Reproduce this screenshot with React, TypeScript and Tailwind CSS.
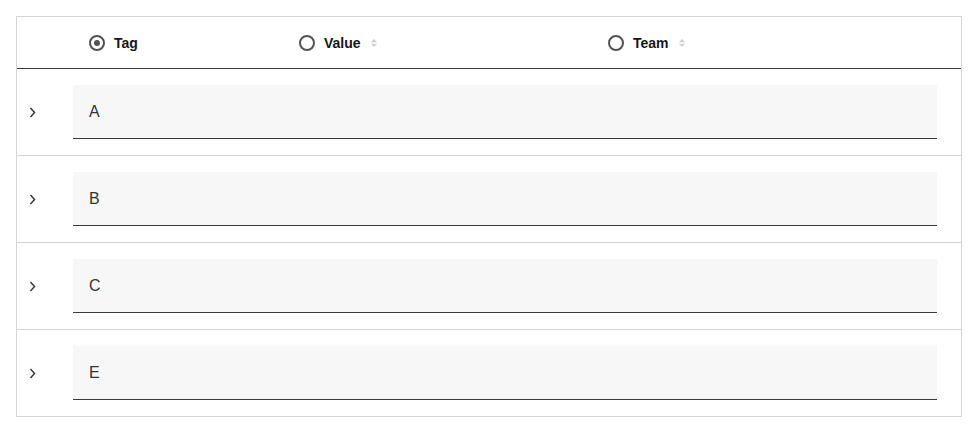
import React from "react";

type Col = { key: string; label: string; width: string; sortable: boolean };

const columns: Col[] = [
  { key: "tag", label: "Tag", width: "w-[210px]", sortable: false },
  { key: "value", label: "Value", width: "w-[309px]", sortable: true },
  { key: "team", label: "Team", width: "flex-1", sortable: true },
];

const rows = ["A", "B", "C", "E"];

function Radio({ checked }: { checked: boolean }) {
  return (
    <span className="w-4 h-4 rounded-full border-2 border-[#525252] flex items-center justify-center shrink-0">
      {checked && <span className="w-[6px] h-[6px] rounded-full bg-[#525252]" />}
    </span>
  );
}

function SortIcon() {
  return (
    <svg width="8" height="10" viewBox="0 0 8 10" className="shrink-0">
      <path d="M4 1 L7 4.3 L1 4.3 Z" fill="#cfcfcf" />
      <path d="M4 9 L7 5.7 L1 5.7 Z" fill="#cfcfcf" />
    </svg>
  );
}

function Chevron() {
  return (
    <svg width="8" height="11" viewBox="0 0 8 11">
      <path d="M1.5 1 L5.5 5.5 L1.5 10" fill="none" stroke="#393939" strokeWidth="1.5" />
    </svg>
  );
}

export default function App() {
  return (
    <div className="w-[978px] h-[433px] bg-white p-4" style={{ fontFamily: '"Liberation Sans", Arial, sans-serif' }}>
      <div className="w-[946px] border border-[#d4d4d4]">
        {/* header */}
        <div className="flex h-[52px] border-b border-[#393939] items-center">
          <div className="w-[56px] shrink-0" />
          {columns.map((c, i) => (
            <div key={c.key} className={`${c.width} flex items-center px-4 gap-[9px]`}>
              <Radio checked={i === 0} />
              <span className="text-sm font-bold text-[#161616]">{c.label}</span>
              {c.sortable && <SortIcon />}
            </div>
          ))}
        </div>

        {/* rows */}
        {rows.map((r, i) => (
          <div key={r} className={`flex items-center py-4 pr-6 ${i < rows.length - 1 ? "border-b border-[#d4d4d4]" : ""}`}>
            <div className="w-[56px] shrink-0 flex pl-[12px]">
              <Chevron />
            </div>
            <div className="flex-1 h-[54px] bg-[#f7f7f7] border-b border-[#393939] flex items-center px-4 text-base text-[#333333]">
              {r}
            </div>
          </div>
        ))}
      </div>
    </div>
  );
}
